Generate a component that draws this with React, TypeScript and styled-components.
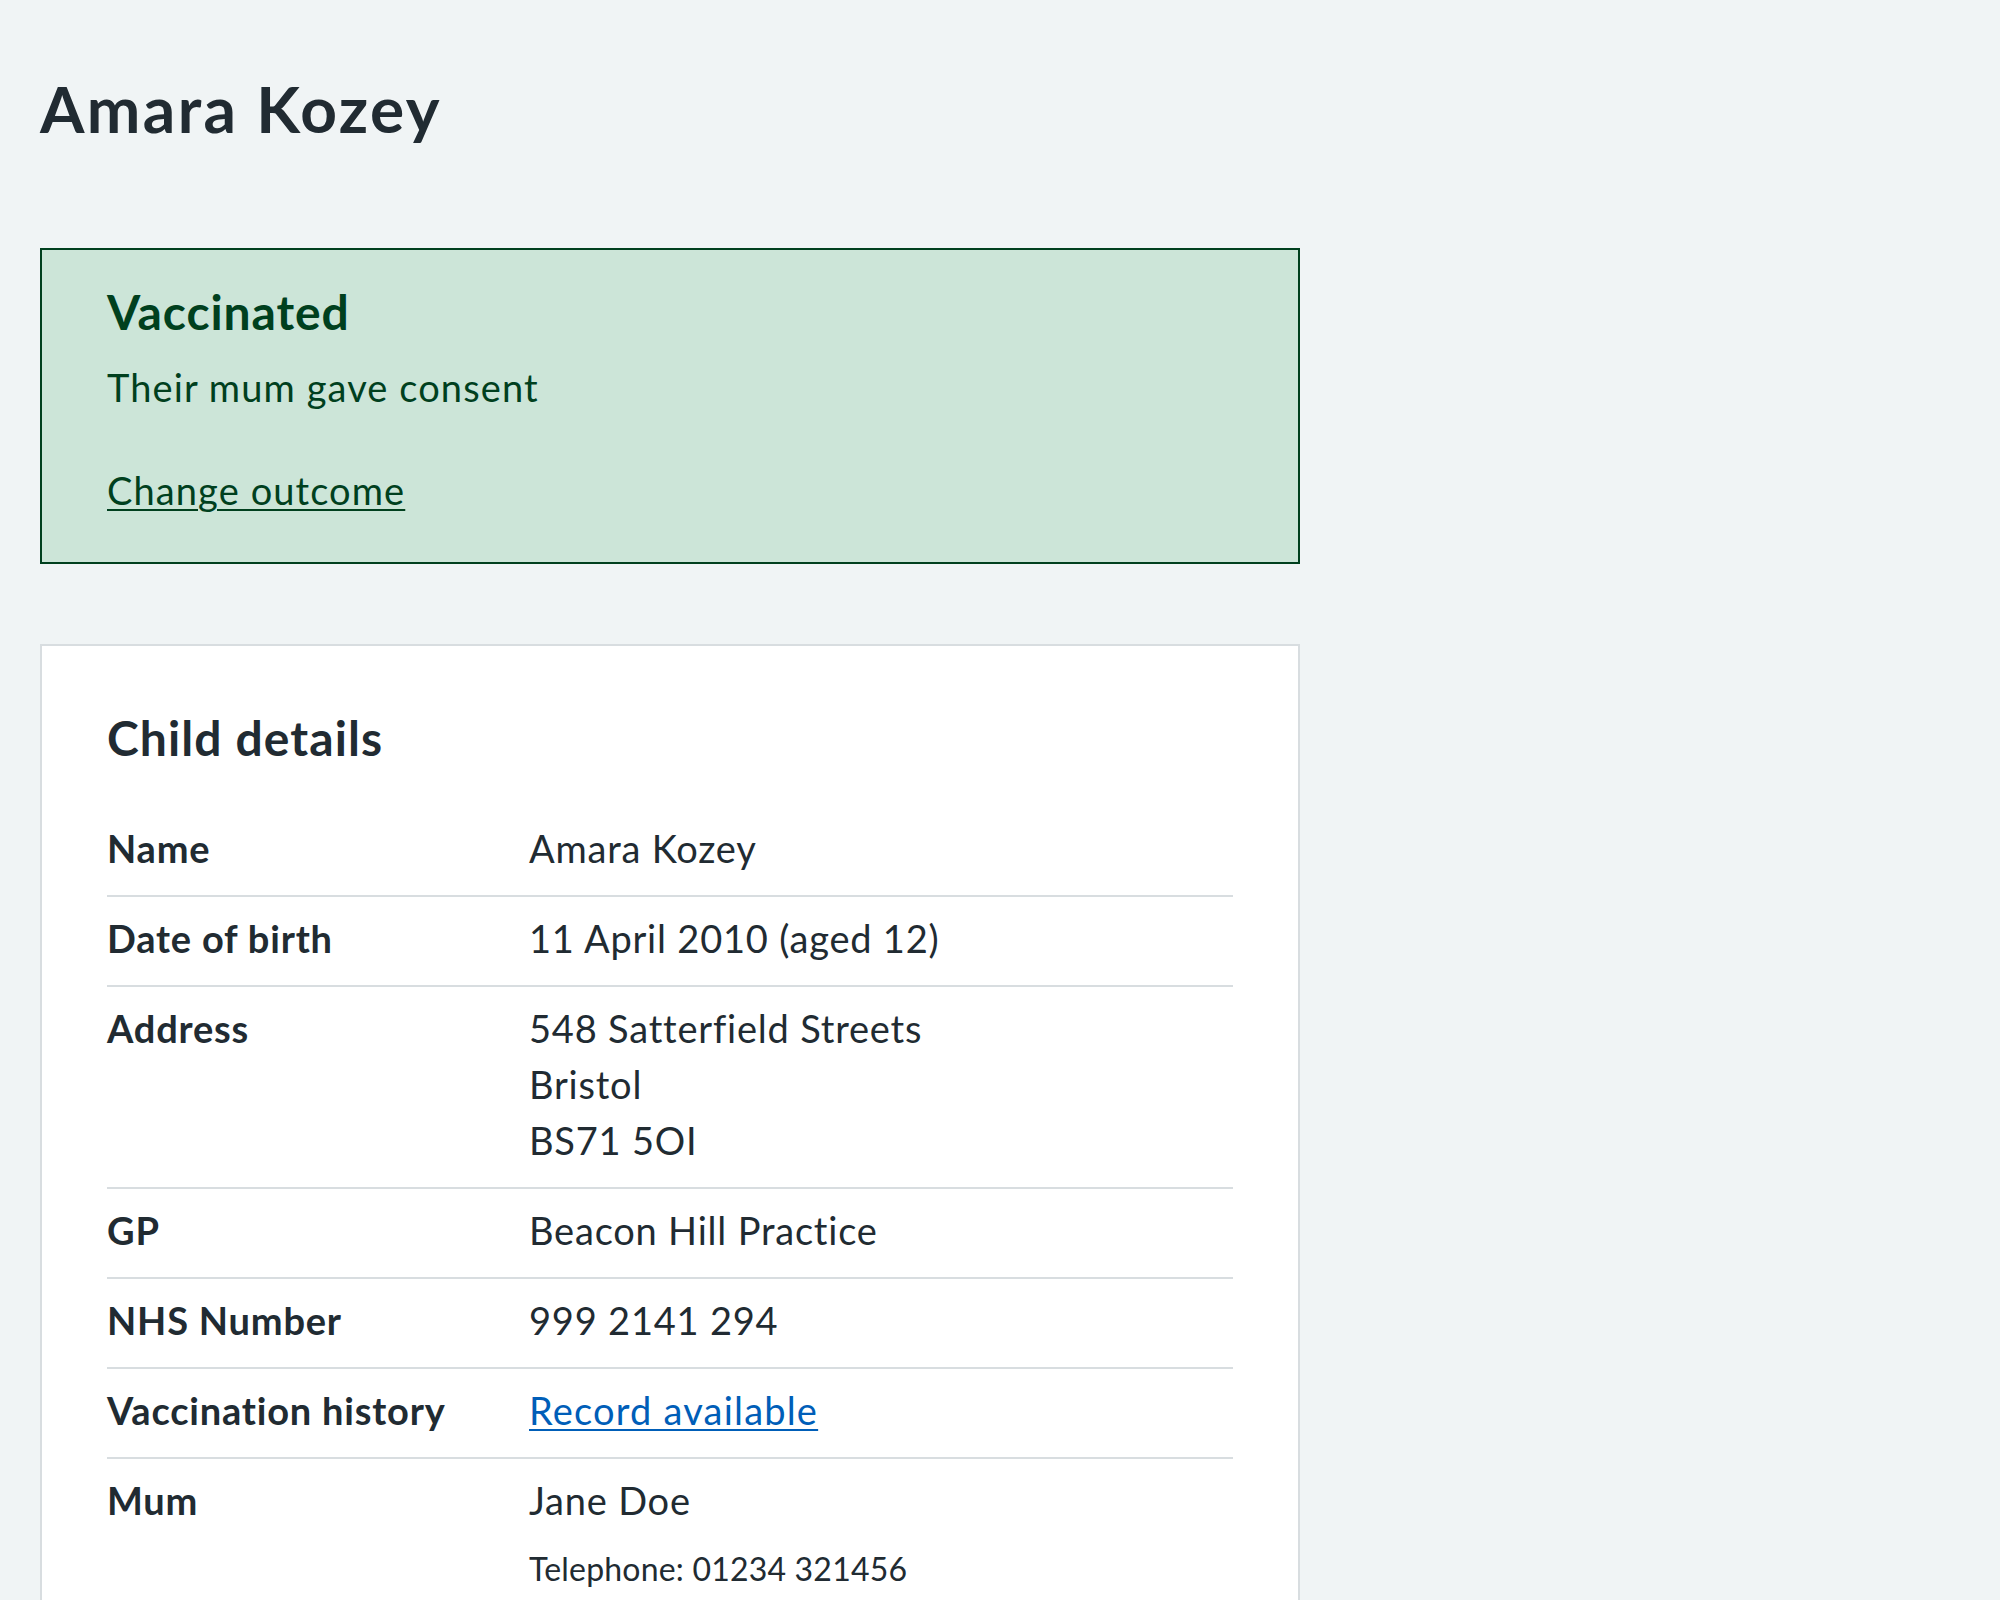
import React from "react";
import styled, { createGlobalStyle } from "styled-components";

const GlobalStyle = createGlobalStyle`
  html, body {
    margin: 0;
    padding: 0;
    background: #f0f4f5;
  }
  body {
    font-family: Lato, "Noto Sans", "Liberation Sans", sans-serif;
    color: #212b32;
    -webkit-font-smoothing: antialiased;
  }
`;

interface DetailRow {
  key: string;
  lines: string[];
  link?: boolean;
  note?: string;
}

const rows: DetailRow[] = [
  { key: "Name", lines: ["Amara Kozey"] },
  { key: "Date of birth", lines: ["11 April 2010 (aged 12)"] },
  { key: "Address", lines: ["548 Satterfield Streets", "Bristol", "BS71 5OI"] },
  { key: "GP", lines: ["Beacon Hill Practice"] },
  { key: "NHS Number", lines: ["999 2141 294"] },
  { key: "Vaccination history", lines: ["Record available"], link: true },
  { key: "Mum", lines: ["Jane Doe"], note: "Telephone: 01234 321456" },
];

const App: React.FC = () => {
  return (
    <>
      <GlobalStyle />
      <Page>
        <Title>Amara Kozey</Title>

        <OutcomePanel>
          <PanelHeading>Vaccinated</PanelHeading>
          <PanelText>Their mum gave consent</PanelText>
          <PanelLink href="#">Change outcome</PanelLink>
        </OutcomePanel>

        <Card>
          <CardHeading>Child details</CardHeading>
          <SummaryList>
            {rows.map((row, i) => (
              <SummaryRow key={row.key} $last={i === rows.length - 1}>
                <Key>{row.key}</Key>
                <Value>
                  {row.link ? (
                    <BlueLink href="#">{row.lines[0]}</BlueLink>
                  ) : (
                    row.lines.map((line) => <Line key={line}>{line}</Line>)
                  )}
                  {row.note && <Note>{row.note}</Note>}
                </Value>
              </SummaryRow>
            ))}
          </SummaryList>
        </Card>
      </Page>
    </>
  );
};

const Page = styled.main`
  padding: 0 40px 80px;
  width: 1260px;
`;

const Title = styled.h1`
  margin: 69px 0 99px;
  font-size: 64px;
  line-height: 80px;
  font-weight: 700;
  letter-spacing: 2.4px;
`;

const OutcomePanel = styled.section`
  background: #cce5d8;
  border: 2px solid #00401e;
  padding: 30px 65px 44px;
  color: #00401e;
`;

const PanelHeading = styled.h2`
  margin: 0 0 15px;
  font-size: 48px;
  line-height: 64px;
  font-weight: 700;
  letter-spacing: 0.9px;
`;

const PanelText = styled.p`
  margin: 0 0 47px;
  font-size: 38px;
  line-height: 56px;
  letter-spacing: 1.1px;
`;

const PanelLink = styled.a`
  display: inline-block;
  font-size: 38px;
  line-height: 56px;
  letter-spacing: 1.1px;
  color: #00401e;
  text-decoration: underline;
  text-decoration-thickness: 2px;
  text-underline-offset: 4px;
`;

const Card = styled.section`
  margin-top: 80px;
  background: #ffffff;
  border: 2px solid #d8dde0;
  padding: 60px 65px 40px;
`;

const CardHeading = styled.h2`
  margin: 0 0 37px;
  font-size: 48px;
  line-height: 64px;
  font-weight: 700;
  letter-spacing: 1.1px;
`;

const SummaryList = styled.dl`
  margin: 0;
`;

const SummaryRow = styled.div<{ $last: boolean }>`
  display: grid;
  grid-template-columns: 422px 1fr;
  padding: 13px 0 19px;
  border-bottom: ${(p) => (p.$last ? "none" : "2px solid #d8dde0")};
  font-size: 38px;
  line-height: 56px;
`;

const Key = styled.dt`
  font-weight: 700;
  letter-spacing: 0.8px;
`;

const Value = styled.dd`
  margin: 0;
  letter-spacing: 0.8px;
`;

const Line = styled.div``;

const BlueLink = styled.a`
  color: #005eb8;
  letter-spacing: 1.2px;
  text-decoration: underline;
  text-decoration-thickness: 2px;
  text-underline-offset: 4px;
`;

const Note = styled.p`
  margin: 17px 0 0;
  font-size: 32px;
  line-height: 48px;
  letter-spacing: 0.2px;
`;

export default App;
